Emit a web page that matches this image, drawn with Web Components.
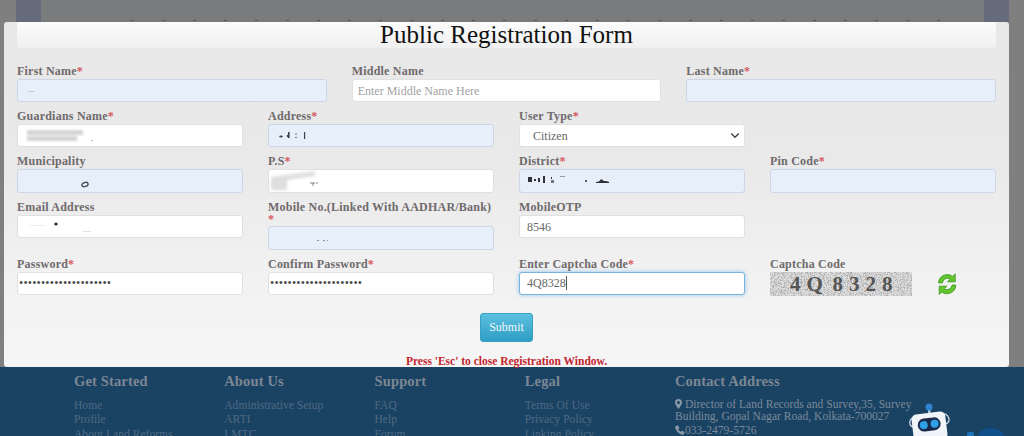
<!DOCTYPE html>
<html lang="en"><head><meta charset="utf-8"><title>Public Registration Form</title>
<style>html,body{margin:0;padding:0;background:#7f7f7f;font-family:"Liberation Serif",serif}</style></head>
<body>
<reg-page>
  <page-backdrop slot="backdrop"></page-backdrop>
  <reg-modal slot="modal">
    <span slot="title">Public Registration Form</span>
    <form-row cols="3">
      <form-field label="First Name" required><text-box tone="filled"><blot-mark kind="dash"></blot-mark></text-box></form-field>
      <form-field label="Middle Name"><text-box placeholder>Enter Middle Name Here</text-box></form-field>
      <form-field label="Last Name" required><text-box tone="filled"></text-box></form-field>
    </form-row>
    <form-row cols="4">
      <form-field label="Guardians Name" required><text-box><blot-mark kind="smear"></blot-mark></text-box></form-field>
      <form-field label="Address" required><text-box tone="filled"><blot-mark kind="address"></blot-mark></text-box></form-field>
      <form-field label="User Type" required><select-box>Citizen</select-box></form-field>
    </form-row>
    <form-row cols="4">
      <form-field label="Municipality"><text-box tone="filled" h="24"><blot-mark kind="muni"></blot-mark></text-box></form-field>
      <form-field label="P.S" required><text-box h="24"><blot-mark kind="ps"></blot-mark></text-box></form-field>
      <form-field label="District" required><text-box tone="filled" h="24"><blot-mark kind="district"></blot-mark></text-box></form-field>
      <form-field label="Pin Code" required><text-box tone="filled" h="24"></text-box></form-field>
    </form-row>
    <form-row cols="4">
      <form-field label="Email Address"><text-box><blot-mark kind="email"></blot-mark></text-box></form-field>
      <form-field label="Mobile No.(Linked With AADHAR/Bank)" required star-below><text-box tone="filled" h="24"><blot-mark kind="mobile"></blot-mark></text-box></form-field>
      <form-field label="MobileOTP"><text-box>8546</text-box></form-field>
    </form-row>
    <form-row cols="4">
      <form-field label="Password" required><text-box dots>•••••••••••••••••••••</text-box></form-field>
      <form-field label="Confirm Password" required><text-box dots>•••••••••••••••••••••</text-box></form-field>
      <form-field label="Enter Captcha Code" required><text-box focused>4Q8328</text-box></form-field>
      <form-field label="Captcha Code"><captcha-box>4Q 8328</captcha-box></form-field>
    </form-row>
    <submit-button slot="action">Submit</submit-button>
    <span slot="note">Press 'Esc' to close Registration Window.</span>
  </reg-modal>
  <site-footer slot="footer">
    <footer-col heading="Get Started"><a>Home</a><a>Profile</a><a>About Land Reforms</a></footer-col>
    <footer-col heading="About Us"><a>Administrative Setup</a><a>ARTI</a><a>LMTC</a></footer-col>
    <footer-col heading="Support"><a>FAQ</a><a>Help</a><a>Forum</a></footer-col>
    <footer-col heading="Legal"><a>Terms Of Use</a><a>Privacy Policy</a><a>Linking Policy</a></footer-col>
    <footer-contact heading="Contact Address"></footer-contact>
    <robot-mark slot="robot"></robot-mark>
  </site-footer>
</reg-page>
<script>
function define(name, css, html, extra){
  customElements.define(name, class extends HTMLElement{
    constructor(){super();this.attachShadow({mode:'open'}).innerHTML='<style>'+css+'</style>'+(typeof html==='function'?html(this):html);}
    connectedCallback(){ if(extra) extra(this); }
  });
}
define('reg-page',`:host{display:flex;flex-direction:column;position:relative;width:1024px;height:436px;overflow:hidden}
 .modal{position:absolute;left:4px;top:22px}`,
 `<slot name="backdrop"></slot><slot name="footer"></slot><div class="modal"><slot name="modal"></slot></div>`);

define('page-backdrop',`:host{display:grid;grid-template-columns:16px 25px 1fr 25px 15px;height:367px;flex:none;background:#7f7f7f}
 .band{height:22px;background:#666b7b}.mid{height:22px;background:#7a7b7d;position:relative}
 .specks{position:absolute;left:90px;right:30px;top:20px;height:1px;background:repeating-linear-gradient(90deg,#55575a 0 3px,transparent 3px 31px)}`,
 `<div></div><div class="band"></div><div class="mid"><div class="specks"></div></div><div class="band"></div><div></div>`);

define('reg-modal',`:host{display:flex;flex-direction:column;box-sizing:border-box;width:1005px;height:345px;padding:0 13px;border-radius:3px;background:linear-gradient(180deg,#e8e8e8 0,#e9e9e9 40%,#f4f4f4 85%,#f5f5f5 100%)}
 h1{margin:0 0 17px;height:26px;font:400 25px/26px "Liberation Serif",serif;text-align:center;color:#111;background:linear-gradient(180deg,#fbfbfb,#f0f0f0);border-radius:0 0 3px 3px}
 .rows{display:flex;flex-direction:column;gap:8px}
 .act{display:flex;justify-content:center;margin-top:17px}
 .note{margin-top:13px;text-align:center;font:700 11.5px/12px "Liberation Serif",serif;color:#c2242e}`,
 `<h1><slot name="title"></slot></h1><div class="rows"><slot></slot></div><div class="act"><slot name="action"></slot></div><div class="note"><slot name="note"></slot></div>`);

define('form-row',`:host{display:grid;gap:25px;align-items:start}`,'<slot></slot>',el=>{
  el.style.gridTemplateColumns='repeat('+(el.getAttribute('cols')||4)+',minmax(0,1fr))';
});

define('form-field',`:host{display:block;min-width:0}
 label{display:block;font:700 12px/12px "Liberation Serif",serif;color:#6f6a6c;margin-bottom:2px;letter-spacing:.22px;white-space:nowrap}
 i{font-style:normal;color:#d8575c}
 :host([star-below]) label{margin-bottom:.5px}
 :host([star-below]) i{display:block;line-height:12px}`,
 el=>`<label>${el.getAttribute('label')}${el.hasAttribute('required')?'<i>*</i>':''}</label><slot></slot>`);

define('text-box',`:host{display:flex;align-items:center;position:relative;box-sizing:border-box;height:23px;padding:0 7px;background:#fff;border:1px solid #e0e0e0;border-radius:3px;font:400 12px/14px "Liberation Serif",serif;color:#686868;white-space:nowrap;overflow:hidden}
 :host([tone=filled]){background:#e7effb;border-color:#ccd6e6}
 :host([placeholder]){color:#a2a2a2;padding-left:5px}
 :host([dots]){padding-left:1px;color:#4a4a4a;letter-spacing:.19px;font-size:12px}
 :host([focused]){border-color:#79b4dc;box-shadow:0 0 4px rgba(82,168,236,.6)}
 :host([h="24"]){height:24px}
 .caret{display:none;width:1px;height:14px;background:#555}
 :host([focused]) .caret{display:block}`,
 `<slot></slot><span class="caret"></span>`);

define('select-box',`:host{display:flex;align-items:center;justify-content:space-between;box-sizing:border-box;height:23px;padding:0 4px 0 13px;background:#fff;border:1px solid #e0e0e0;border-radius:3px;font:400 12px/14px "Liberation Serif",serif;color:#686868}
 svg{display:block;width:10px;height:7px}`,
 `<slot></slot><svg viewBox="0 0 10 7"><path d="M1.2 1.5 5 5.2 8.8 1.5" fill="none" stroke="#444" stroke-width="1.4"/></svg>`);

const blots={
 dash:`<svg width="60" height="20" style="left:10px;top:1px"><rect x="0" y="10" width="7" height="1" fill="#c9d0dc"/></svg>`,
 smear:`<svg width="80" height="22" style="left:3px;top:0"><defs><filter id="b"><feGaussianBlur stdDeviation="1.2"/></filter></defs><g filter="url(#b)" fill="#d4d4d4"><rect x="6" y="5" width="56" height="5"/><rect x="6" y="11" width="50" height="5"/></g><rect x="70" y="15" width="2" height="1" fill="#bbb"/></svg>`,
 address:`<svg width="60" height="22" style="left:6px;top:0" fill="#3d4450"><ellipse cx="6" cy="11.5" rx="1.8" ry="1.1"/><rect x="13" y="7" width="1.6" height="6"/><circle cx="13" cy="11" r="1.3"/><circle cx="21" cy="9" r=".7"/><circle cx="21" cy="12.5" r=".7"/><rect x="29" y="7" width="1.2" height="7"/></svg>`,
 muni:`<svg width="90" height="22" style="left:42px;top:0"><ellipse cx="25" cy="14.5" rx="3.2" ry="2" fill="none" stroke="#4a4f58" stroke-width="1.4" transform="rotate(-20 25 14.5)"/></svg>`,
 ps:`<svg width="70" height="22" style="left:0;top:0"><defs><filter id="p"><feGaussianBlur stdDeviation="1.6"/></filter></defs><path d="M2 7 46 1v5L18 10v10H2Z" fill="#dedede" filter="url(#p)"/><path d="M41 13h5M44 13v3M47 13h2" stroke="#666" stroke-width=".8"/></svg>`,
 district:`<svg width="100" height="22" style="left:6px;top:0" fill="#2f3238"><rect x="2" y="7" width="4" height="5"/><rect x="8" y="9" width="2" height="2"/><rect x="12" y="8" width="2" height="4"/><rect x="17" y="6" width="2" height="7"/><rect x="25" y="7" width="1" height="2"/><rect x="25" y="10" width="3" height="3" fill="#777"/><rect x="34" y="6" width="5" height="1" fill="#999"/><circle cx="60" cy="11" r="1"/><path d="M70 12c3 0 4-1 5-3l3 2c2 0 4 0 5 1v1H70Z"/></svg>`,
 email:`<svg width="120" height="22" style="left:1px;top:0"><circle cx="37" cy="8" r="1.6" fill="#222"/><rect x="10" y="9" width="16" height="1" fill="#ececec"/><rect x="64" y="15" width="8" height="1" fill="#e2e2e2"/></svg>`,
 mobile:`<svg width="90" height="22" style="left:46px;top:0" fill="#8a93a3"><rect x="2" y="13" width="2" height="1"/><rect x="8" y="13" width="2" height="1"/><rect x="12" y="13" width="1" height="1"/></svg>`
};
define('blot-mark',`:host{display:contents}svg{position:absolute;display:block;overflow:visible}`,
 el=>blots[el.getAttribute('kind')]||'');

define('captcha-box',`:host{display:flex;align-items:center;gap:26px;height:24px}
 .img{position:relative;width:142px;height:24px;flex:none;overflow:hidden;background:#c9c9c9}
 .img svg{position:absolute;inset:0;width:100%;height:100%}
 .txt{position:absolute;left:20px;top:0;font:700 21px/24px "Liberation Serif",serif;color:#555;letter-spacing:6px;word-spacing:-7.5px;white-space:pre}
 .re{width:19px;height:22px;flex:none;display:block}`,
 `<div class="img"><svg><filter id="n" x="0" y="0" width="100%" height="100%"><feTurbulence type="fractalNoise" baseFrequency="1.3" numOctaves="2" seed="4"/><feColorMatrix values="0 0 0 0 .42  0 0 0 0 .42  0 0 0 0 .42  5 0 0 0 -2.3"/></filter><rect width="100%" height="100%" fill="#dcdcdc"/><rect width="100%" height="100%" filter="url(#n)"/></svg><span class="txt"><slot></slot></span></div>
 <svg class="re" viewBox="1.5 1 17 20"><g fill="#62c52e" stroke="#3f9a1e" stroke-width=".8" stroke-linejoin="round"><path d="M2 10C2 5 6 2.500 10 2.500c2 0 3.500.6 4.700 1.600L17 1.800V9h-7l2.400-2.400c-.7-.5-1.500-.8-2.400-.8-2.500 0-4.300 1.800-4.600 4.200Z"/><path d="M17.500 12c0 5-4 7.800-8 7.800-2 0-3.500-.6-4.700-1.600L2.500 20.500V13h7l-2.400 2.400c.7.5 1.500.8 2.400.8 2.500 0 4.300-1.800 4.600-4.200Z"/></g></svg>`);

define('submit-button',`:host{display:flex;align-items:center;justify-content:center;box-sizing:border-box;width:53px;height:29px;border-radius:3px;background:linear-gradient(180deg,#5cc0de,#2f9dc5);border:1px solid #3a9fc4;color:#f2f8fb;font:400 12px/14px "Liberation Serif",serif}`,'<slot></slot>');

define('site-footer',`:host{display:flex;position:relative;flex:1;box-sizing:border-box;padding:6px 0 0 74px;background:#1a4263;overflow:hidden}
 .r{position:absolute;left:900px;top:36px}`,`<slot></slot><div class="r"><slot name="robot"></slot></div>`);

define('footer-col',`:host{display:block;flex:none;width:150.250px}
 h3{margin:0 0 8px;font:700 14.5px/17px "Liberation Serif",serif;color:#7b8794;letter-spacing:.15px}
 ::slotted(a){display:block;font:400 11.500px/14.3px "Liberation Serif",serif;letter-spacing:.05px;color:#4f6a82;white-space:nowrap}`,
 el=>`<h3>${el.getAttribute('heading')}</h3><slot></slot>`);

define('footer-contact',`:host{display:block;flex:none;width:240px}
 h3{margin:0 0 9px;font:700 14.5px/17px "Liberation Serif",serif;color:#7b8794;letter-spacing:.15px}
 p{margin:0;font:400 11.500px/11.500px "Liberation Serif",serif;color:#7a8a9a;letter-spacing:.04px}
 p+p{margin-top:1px;line-height:14px}
 svg{display:inline-block;vertical-align:-1px;fill:#8a98a6}`,
 el=>`<h3>${el.getAttribute('heading')}</h3>
 <p><svg width="7" height="10" viewBox="0 0 7 10"><path fill-rule="evenodd" d="M3.500 0A3.500 3.500 0 0 0 0 3.500C0 5.800 3.500 10 3.500 10S7 5.800 7 3.500A3.500 3.500 0 0 0 3.500 0Zm0 2a1.500 1.500 0 1 1 0 3 1.500 1.500 0 0 1 0-3Z"/></svg> Director of Land Records and Survey,35, Survey Building, Gopal Nagar Road, Kolkata-700027</p>
 <p><svg width="10" height="10" viewBox="0 0 10 10"><path d="M2.300.4.700 1.300C.1 1.700 0 2.400.2 3.100 1 5.900 4.100 9 6.900 9.800c.7.200 1.400.1 1.800-.5l.9-1.600c.2-.3.100-.6-.2-.8L7.300 5.800c-.3-.2-.6-.1-.8.100l-.7.900C4.900 6.400 3.600 5.100 3.200 4.200l.9-.7c.2-.2.300-.5.100-.8L3.100.6C2.900.3 2.600.2 2.300.4Z"/></svg>033-2479-5726</p>`);

define('robot-mark',`:host{display:block;width:124px;height:33px}svg{display:block}`,
 `<svg width="124" height="33" viewBox="0 0 124 33">
  <circle cx="91" cy="41.500" r="16.500" fill="#0f4f8c"/>
  <rect x="67" y="29" width="7" height="6" rx="2" fill="#1f73b8"/>
  <g fill="none" stroke="#cfd8e2" stroke-width="1.300"><path d="M14 14c-3 1-5 4-4 7 .5 2 2 3 4 3"/><path d="M44 11c3 0 5 3 5 6 0 2-2 4-4 4"/></g>
  <rect x="28" y="5" width="2.500" height="6" fill="#9fc4e4"/>
  <circle cx="29" cy="4" r="3.500" fill="#2e86d0"/>
  <g transform="rotate(-7 29 24)"><rect x="12.500" y="10" width="34" height="28" rx="5" fill="#f1f5fa"/>
   <rect x="18" y="15" width="23" height="13" rx="6.500" fill="#1a2a4a"/>
   <circle cx="24" cy="21.500" r="4" fill="#2ea0e6"/><circle cx="35" cy="21.500" r="4" fill="#2ea0e6"/></g>
 </svg>`);
</script>
</body></html>
